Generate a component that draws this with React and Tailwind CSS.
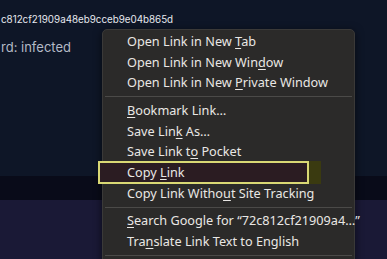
import React from "react";

const U = ({ children }) => <span className="underline underline-offset-2 decoration-1">{children}</span>;

function Item({ children, highlight }) {
  return (
    <div className="relative h-[20.7px] flex items-center pl-[24px] text-[12.7px] leading-none text-[#e9e7e4] whitespace-nowrap">
      {highlight && (
        <>
          <div className="absolute left-[-5px] top-[-1px] w-[211px] h-[23px] border-2 border-[#d9d874] bg-[#2b1c22]" />
          <div className="absolute left-[206px] top-[-1px] w-[12px] h-[23px] bg-[#3a3a10]" />
        </>
      )}
      <span className="relative">{children}</span>
    </div>
  );
}

const Sep = () => <div className="h-px bg-[#4b4a48] my-[3px] mx-[2px]" />;

export default function App() {
  return (
    <div className="relative w-[387px] h-[259px] overflow-hidden bg-[#0e1627]" style={{ fontFamily: '"Noto Sans", "Open Sans", sans-serif' }}>
      <div className="flex flex-col h-full">
        <div className="h-[176px] bg-[#0e1627] pt-[15px] pl-[1px]">
          <div className="text-[9.8px] text-[#e6e8ee] leading-none" style={{ fontFamily: 'Inter, sans-serif' }}>c812cf21909a48eb9cceb9e04b865d</div>
          <div className="mt-[16px] text-[13px] text-[#b4bac6] leading-none" style={{ fontFamily: 'Inter, sans-serif' }}>rd: infected</div>
        </div>
        <div className="h-[24px] bg-[#090b19]" />
        <div className="flex-1 bg-[#1a1936]" />
      </div>

      <div className="absolute left-[102px] top-[29px] w-[253px] h-[240px] rounded-[5px] bg-[#2b2a29] border border-[#3a3938] shadow-[0_2px_8px_rgba(0,0,0,0.6)] pt-[1px]">
        <Item>Open Link in New <U>T</U>ab</Item>
        <Item>Open Link in New Win<U>d</U>ow</Item>
        <Item>Open Link in New <U>P</U>rivate Window</Item>
        <Sep />
        <Item><U>B</U>ookmark Link…</Item>
        <Item>Save Lin<U>k</U> As…</Item>
        <Item>Save Link t<U>o</U> Pocket</Item>
        <Item highlight>Copy <U>L</U>ink</Item>
        <Item>Copy Link Witho<U>u</U>t Site Tracking</Item>
        <Sep />
        <Item><U>S</U>earch Google for “72c812cf21909a4…”</Item>
        <Item>Tra<U>n</U>slate Link Text to English</Item>
        <Sep />
      </div>
    </div>
  );
}
